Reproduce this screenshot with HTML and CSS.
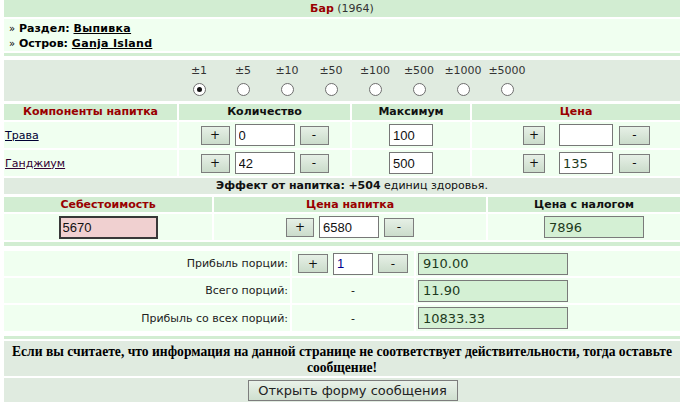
FILE: index.html
```html
<!DOCTYPE html>
<html lang="ru">
<head>
<meta charset="utf-8">
<title>Бар</title>
<link rel="stylesheet" href="styles.css">
</head>
<body>
<div class="page">
  <div class="title"><b class="red">Бар</b> (1964)</div>
  <div class="info">
    <div class="line"><span class="raquo">»</span> <b>Раздел:</b> <a class="blink" href="#">Выпивка</a></div>
    <div class="line"><span class="raquo">»</span> <b>Остров:</b> <a class="blink" href="#">Ganja Island</a></div>
  </div>
  <div class="strip"></div>
  <div class="radios">
    <label class="opt"><span>±1</span><input type="radio" name="step" checked></label>
    <label class="opt"><span>±5</span><input type="radio" name="step"></label>
    <label class="opt"><span>±10</span><input type="radio" name="step"></label>
    <label class="opt"><span>±50</span><input type="radio" name="step"></label>
    <label class="opt"><span>±100</span><input type="radio" name="step"></label>
    <label class="opt"><span>±500</span><input type="radio" name="step"></label>
    <label class="opt"><span>±1000</span><input type="radio" name="step"></label>
    <label class="opt"><span>±5000</span><input type="radio" name="step"></label>
  </div>

  <div class="grid comp">
    <div class="th red">Компоненты напитка</div>
    <div class="th">Количество</div>
    <div class="th">Максимум</div>
    <div class="th red">Цена</div>

    <div class="td name"><a class="lnk" href="#">Трава</a></div>
    <div class="td ctr"><button class="btn b29">+</button><input class="inp w60" value="0"><button class="btn b29">-</button></div>
    <div class="td ctr"><input class="inp w44" value="100"></div>
    <div class="td price"><button class="btn b22">+</button><input class="inp w54" value=""><button class="btn b31">-</button></div>

    <div class="td name"><a class="lnk visited" href="#">Ганджиум</a></div>
    <div class="td ctr"><button class="btn b29">+</button><input class="inp w60" value="42"><button class="btn b29">-</button></div>
    <div class="td ctr"><input class="inp w44" value="500"></div>
    <div class="td price"><button class="btn b22">+</button><input class="inp w54 gtext" value="135"><button class="btn b31">-</button></div>
  </div>

  <div class="effect"><b>Эффект от напитка:</b> <b>+504</b> единиц здоровья.</div>

  <div class="grid cost">
    <div class="th red">Себестоимость</div>
    <div class="th red">Цена напитка</div>
    <div class="th">Цена с налогом</div>

    <div class="td ctr"><input class="inp pink" value="5670"></div>
    <div class="td ctr"><button class="btn b28">+</button><input class="inp w60" value="6580"><button class="btn b30">-</button></div>
    <div class="td tax"><input class="field w100" value="7896"></div>
  </div>

  <div class="strip s2"></div>

  <div class="grid profit">
    <div class="lbl">Прибыль порции:</div>
    <div class="mid"><button class="btn b30">+</button><input class="inp w40 blue" value="1"><button class="btn b30">-</button></div>
    <div class="res"><input class="field w150" value="910.00"></div>

    <div class="lbl">Всего порций:</div>
    <div class="mid">-</div>
    <div class="res"><input class="field w150" value="11.90"></div>

    <div class="lbl">Прибыль со всех порций:</div>
    <div class="mid">-</div>
    <div class="res"><input class="field w150" value="10833.33"></div>
  </div>

  <div class="strip s3"></div>

  <div class="msg">Если вы считаете, что информация на данной странице не соответствует действительности, тогда оставьте сообщение!</div>
  <div class="send"><button class="big">Открыть форму сообщения</button></div>
</div>
</body>
</html>
```

FILE: styles.css
```css
html, body {
  margin: 0;
  padding: 0;
  background: #ffffff;
}
body {
  font-family: "DejaVu Sans", Verdana, sans-serif;
  font-size: 11px;
  color: #111;
}
.page {
  padding: 0 3px 0 4px;
  display: flex;
  flex-direction: column;
}
.red { color: #990000; }

.title {
  height: 17px;
  line-height: 17px;
  background: #d2edd2;
  text-align: center;
  color: #333;
}
.title b { font-weight: bold; }

.info {
  margin-top: 2px;
  height: 32px;
  box-sizing: border-box;
  padding: 2px 0 0 5px;
  background: #f0fff0;
}
.info .line {
  line-height: 15px;
  font-weight: bold;
  color: #000;
}
.raquo { font-weight: normal; font-size: 10px; }
.blink { color: #000; font-weight: bold; text-decoration: underline; letter-spacing: 0.3px; }

.strip {
  margin-top: 2px;
  height: 3px;
  background: #d2edd2;
}

.radios {
  margin-top: 4px;
  height: 41px;
  background: #e0ebe0;
  display: flex;
  padding-left: 173px;
  box-sizing: border-box;
  padding-top: 4px;
}
.opt {
  width: 44px;
  display: flex;
  flex-direction: column;
  align-items: center;
  color: #333;
}
.opt span { line-height: 14px; }
.opt input {
  appearance: none;
  -webkit-appearance: none;
  margin: 5px 0 0 0;
  width: 13px;
  height: 13px;
  border-radius: 50%;
  border: 1px solid #6e6e6e;
  background: #fff;
  box-sizing: border-box;
  position: relative;
}
.opt input:checked::after {
  content: "";
  position: absolute;
  left: 3px;
  top: 3px;
  width: 5px;
  height: 5px;
  border-radius: 50%;
  background: #111;
}

.grid {
  display: grid;
  gap: 2px;
}
.comp {
  margin-top: 3px;
  grid-template-columns: 173px 171px 118px 1fr;
  grid-template-rows: 16px 26px 26px;
}
.th {
  background: #d2edd2;
  font-weight: bold;
  text-align: center;
  line-height: 16px;
}
.td {
  background: #f0fff0;
  display: flex;
  align-items: center;
}
.name { padding-left: 1px; }
.lnk { color: #000033; text-decoration: underline; }
.lnk.visited { color: #330033; }
.ctr { justify-content: center; gap: 5px; }
.price { padding-left: 51px; gap: 14px; }
.price .inp { margin: 0 -8px 0 0; }
.tax { padding-left: 56px; }

.btn {
  height: 19px;
  box-sizing: border-box;
  border: 1px solid #7d7d7d;
  background: linear-gradient(#e6f0e6, #cbdccb);
  font-family: "DejaVu Sans", Verdana, sans-serif;
  font-size: 12px;
  color: #111;
  padding: 0;
  margin: 0;
  line-height: 16px;
}
.b22 { width: 22px; }
.b28 { width: 28px; }
.b29 { width: 29px; }
.b30 { width: 30px; }
.b31 { width: 31px; }

.inp {
  height: 22px;
  box-sizing: border-box;
  border: 1px solid #777;
  background: #fff;
  font-family: "Liberation Sans", Arial, sans-serif;
  font-size: 13px;
  color: #111;
  padding: 0 0 0 3px;
  margin: 0;
}
.w40 { width: 40px; }
.w44 { width: 44px; }
.w54 { width: 54px; }
.w60 { width: 60px; }
.gtext { color: #1d3a1d; font-family: "DejaVu Sans", Verdana, sans-serif; }
.blue { color: #00008b; }
.pink {
  width: 99px;
  height: 23px;
  background: #f0d0d0;
  border: 2px solid #383838;
  padding-left: 2px;
}

.effect {
  margin-top: 2px;
  height: 16px;
  line-height: 16px;
  background: #e0ebe0;
  text-align: center;
  padding-left: 20px;
}

.cost {
  margin-top: 3px;
  grid-template-columns: 208px 272px 1fr;
  grid-template-rows: 15px 26px;
}
.cost .th { line-height: 15px; }

.field {
  height: 22px;
  box-sizing: border-box;
  border: 1px solid #7a7a7a;
  background: #d4f0d4;
  font-family: "DejaVu Sans", Verdana, sans-serif;
  font-size: 13px;
  color: #1d3a1d;
  padding: 0 0 0 4px;
  margin: 0;
}
.w100 { width: 100px; }
.w150 { width: 150px; }

.s2 { margin-top: 2px; height: 4px; }

.profit {
  margin-top: 5px;
  grid-template-columns: 286px 122px 1fr;
  grid-template-rows: 25px 25px 26px;
}
.profit > div {
  background: #f0fff0;
  display: flex;
  align-items: center;
}
.lbl { justify-content: flex-end; padding-right: 2px; color: #222; }
.mid { justify-content: center; gap: 5px; }
.res { padding-left: 2px; }

.s3 { margin-top: 5px; height: 3px; }

.msg {
  margin-top: 2px;
  height: 35px;
  box-sizing: border-box;
  padding: 3px 2px 0;
  background: #e0ebe0;
  text-align: center;
  font-family: "Liberation Serif", "Times New Roman", serif;
  font-weight: bold;
  font-size: 13.6px;
  line-height: 16px;
  color: #000;
}
.send {
  margin-top: 2px;
  height: 25px;
  background: #e0ebe0;
  display: flex;
  justify-content: center;
  align-items: flex-start;
  padding-top: 2px;
  padding-left: 21px;
  box-sizing: border-box;
}
.big {
  width: 210px;
  height: 21px;
  box-sizing: border-box;
  border: 1px solid #7d7d7d;
  background: linear-gradient(#e9f2e9, #cfdfcf);
  font-family: "DejaVu Sans", Verdana, sans-serif;
  font-size: 13px;
  color: #222;
  padding: 0;
  margin: 0;
}
```
